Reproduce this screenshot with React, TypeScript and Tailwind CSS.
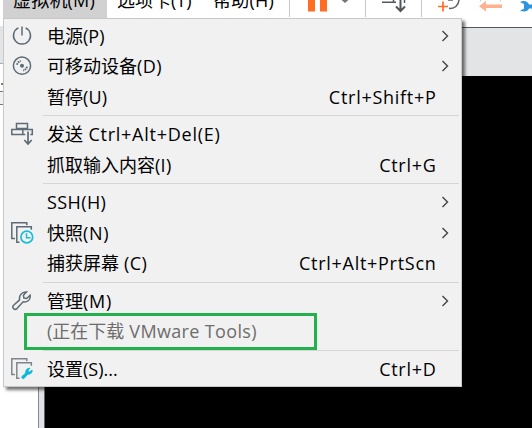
import React from "react";

type IconName = "power" | "disc" | "send" | "snapshot" | "wrench" | "settings";

type Entry = {
  zh: string;
  latin?: string;
  tracking?: string;
  keys?: string;
  icon?: IconName;
  submenu?: boolean;
  disabled?: boolean;
};

const groups: Entry[][] = [
  [
    { zh: "电源", latin: "(P)", icon: "power", submenu: true },
    { zh: "可移动设备", latin: "(D)", tracking: "tracking-[0.4px]", icon: "disc", submenu: true },
    { zh: "暂停", latin: "(U)", tracking: "tracking-[0.2px]", keys: "Ctrl+Shift+P" },
  ],
  [
    { zh: "发送", latin: " Ctrl+Alt+Del(E)", tracking: "tracking-[0.75px]", icon: "send" },
    { zh: "抓取输入内容", latin: "(I)", tracking: "tracking-[0.3px]", keys: "Ctrl+G" },
  ],
  [
    { zh: "", latin: "SSH(H)", tracking: "tracking-[0.4px]", submenu: true },
    { zh: "快照", latin: "(N)", tracking: "tracking-[0.7px]", icon: "snapshot", submenu: true },
    { zh: "捕获屏幕", latin: " (C)", tracking: "tracking-[0.4px]", keys: "Ctrl+Alt+PrtScn" },
  ],
  [
    { zh: "管理", latin: "(M)", tracking: "tracking-[0.7px]", icon: "wrench", submenu: true },
    { zh: "正在下载", latin: " VMware Tools)", tracking: "tracking-[0.35px]", disabled: true },
  ],
  [{ zh: "设置", latin: "(S)...", icon: "settings", keys: "Ctrl+D" }],
];

const wrenchPath =
  "M2 18.6c-1-1-1-2.3 0-3.3l6-5.4C7.2 6 9.6 1.6 15 2l-3.2 3.3.5 2.7 2.8.5L18.5 5.2c.8 5-3.5 7.5-7 6.6L5.4 18.6c-1 1-2.4 1-3.4 0z";

function Icon({ name }: { name: IconName }) {
  return (
    <svg width="24" height="24" viewBox="0 0 24 24" fill="none" stroke="#5d6b76" strokeWidth="1.5">
      {name === "power" && (
        <>
          <path d="M8.4 3.9a8.5 8.5 0 1 0 7.2 0" />
          <path d="M12 2.5v9" />
        </>
      )}
      {name === "disc" && (
        <>
          <circle cx="12" cy="11.7" r="8.6" />
          <circle cx="12" cy="11.7" r="1.4" fill="#5d6b76" strokeWidth="1.1" />
          <path d="M7 10.8a5 5 0 0 1 3.8-3.9M17 12.6a5 5 0 0 1-3.8 3.9" strokeWidth="1.9" strokeDasharray="1.7 .7" />
        </>
      )}
      {name === "send" && (
        <>
          <path d="M5.5 1.5h11v5h-11zM.8 7.5h11v5h-11zM11.8 12.5v-5h9.5v5h-2M11.8 12.5h2.5" />
          <path d="M17 9.5v12M13.3 18l3.7 4 3.7-4" strokeWidth="1.7" />
        </>
      )}
      {name === "snapshot" && (
        <>
          <path d="M4 17.5H.8V1.7h15v2.6M8.5 21.2H5.8V5.8h14.5v3" />
          <circle cx="15.8" cy="16" r="5.9" fill="#f1f1f1" stroke="#19bfd7" strokeWidth="1.7" />
          <path d="M15.5 12.3v4.4h4" stroke="#19bfd7" />
        </>
      )}
      {name === "wrench" && <path d={wrenchPath} transform="translate(.6 1)" />}
      {name === "settings" && (
        <>
          <path d="M4 17.5H.8V1.7h15v2.6M8.5 21.2H5.8V5.8h14.5v3" stroke="#7f8589" />
          <path d={wrenchPath} transform="translate(10 10) scale(.6)" fill="#08b8dc" stroke="#08b8dc" />
        </>
      )}
    </svg>
  );
}

function Row({ item }: { item: Entry }) {
  return (
    <div
      className={`flex h-[30.5px] items-center pl-[7px] leading-[30px] ${item.disabled ? "text-[#6d6d6d]" : "text-black"}`}
    >
      <span className={`flex w-9 shrink-0 ${item.icon === "power" || item.icon === "disc" ? "-ml-px mr-px" : ""}`}>
        {item.icon && <Icon name={item.icon} />}
      </span>
      <span className="whitespace-pre">
        {item.disabled && "("}
        {item.zh}
        <span className={item.tracking}>{item.latin}</span>
      </span>
      <span className="flex-1" />
      {item.keys && <span className="mr-[24.5px] tracking-[0.72px]">{item.keys}</span>}
      {item.submenu && (
        <svg className="mr-3" width="8" height="12" viewBox="0 0 8 12" fill="none" stroke="#444" strokeWidth="1.4">
          <path d="M1.5 1l5 5-5 5" />
        </svg>
      )}
    </div>
  );
}

function Toolbar() {
  return (
    <header className="flex h-[26px] bg-white">
      <nav className="flex h-[18px] w-[289px] overflow-hidden text-[18px] leading-[30px] whitespace-nowrap">
        <span className="ml-[3px] w-[104px] bg-[#d1d1d1] pl-[10px]"><span className="-mt-[15px] block tracking-[0.2px]">虚拟机(M)</span></span>
        <span className="w-[97px] pl-[10px]"><span className="-mt-[15px] block">选项卡(T)</span></span>
        <span className="pl-[9px]"><span className="-mt-[15px] block tracking-[0.2px]">帮助(H)</span></span>
      </nav>
      <svg width="243" height="26" viewBox="289 0 243 26" fill="none">
        <path d="M289.5 0v17M365.5 0v17M421.5 0v17" stroke="#c6c6c6" />
        <path d="M308 0h7v11.5h-7zM320 0h7v11.5h-7z" fill="#ff6d22" />
        <path d="M341.5 0h7l-3.500 3z" fill="#777" />
        <path d="M382 2.3h14M393.5 0v2.5M404.5 0v3" stroke="#55585a" strokeWidth="1.5" />
        <path d="M400.5 0v10M396 6.5l4.5 4.5 4.5-4.5" stroke="#50575c" strokeWidth="2" />
        <path d="M438 6.5h10M443 1.5v10" stroke="#ff6d22" strokeWidth="1.7" />
        <path d="M449 8.3c5.5 1 9.5-3 10-8.3M448 0h5" stroke="#5f6568" strokeWidth="1.6" />
        <path d="M480.5 0v1.5M500.5 0v1.5" stroke="#ccc" />
        <path d="M479 6.3l7-5.3v3.5h16v3.5h-16v3.5z" fill="#ffb08d" />
        <path d="M520 2c4-2 8-.5 9 2.5h3v4h-3c-1 3-5 4-9 2l4-1.7V4z" fill="#2c96dc" />
      </svg>
    </header>
  );
}

export default function App() {
  return (
    <div className="relative h-[428px] w-[532px] overflow-hidden bg-white font-['Open_Sans','Noto_Sans_CJK_SC',sans-serif]">
      <Toolbar />
      <main className="flex h-[402px]">
        <aside className="w-[38px] bg-white">
          <div className="h-[38px] border-b border-[#a9acaf] bg-[#e3e4e6]" />
          <div className="h-7 border-b border-[#777] pt-[19px]">
            <span className="ml-px block size-[2px] bg-[#8a7770]" />
          </div>
          <div className="h-[13px] border-b border-[#777] bg-[#f1f1f1]" />
        </aside>
        <div className="w-[7px] border-x border-r-[#60646b] border-l-[#85888d] bg-[#e0e1e4]" />
        <section className="mt-px flex-1 border-t border-[#55585b] bg-[#e3e4e6] pt-12">
          <div className="h-full bg-black" />
        </section>
      </main>

      <div className="absolute top-[18px] left-[3px] h-[369px] w-[459px] border border-[#c8c8c8] bg-[#f1f1f1] pt-[1.5px] text-[18px] shadow-[3px_3px_3px_rgba(0,0,0,0.55)]">
        {groups.map((group, i) => (
          <React.Fragment key={i}>
            {i > 0 && (
              <div className="flex h-[7px] pt-[3px] pr-[2px] pl-[39px]">
                <div className="h-px flex-1 bg-[#d5d5d5]" />
              </div>
            )}
            {group.map((item, j) => (
              <Row key={j} item={item} />
            ))}
          </React.Fragment>
        ))}
      </div>
      <div className="absolute top-[313px] left-6 h-[37px] w-[293px] border-3 border-[#22b14c]" />
    </div>
  );
}
